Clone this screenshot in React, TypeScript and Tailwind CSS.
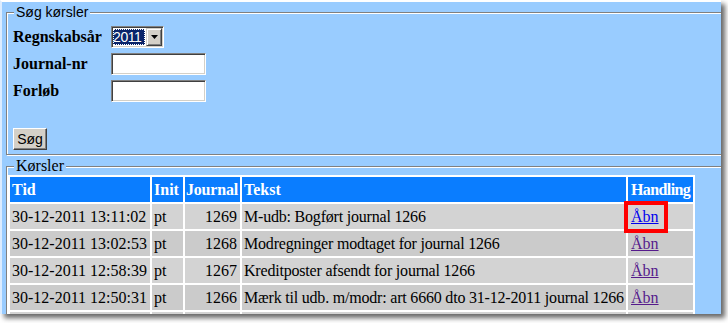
import React from "react";

type Run = { tid: string; init: string; journal: number; tekst: string };

const runs: Run[] = [
  { tid: "30-12-2011 13:11:02", init: "pt", journal: 1269, tekst: "M-udb: Bogført journal 1266" },
  { tid: "30-12-2011 13:02:53", init: "pt", journal: 1268, tekst: "Modregninger modtaget for journal 1266" },
  { tid: "30-12-2011 12:58:39", init: "pt", journal: 1267, tekst: "Kreditposter afsendt for journal 1266" },
  { tid: "30-12-2011 12:50:31", init: "pt", journal: 1266, tekst: "Mærk til udb. m/modr: art 6660 dto 31-12-2011 journal 1266" },
];

const serif = "font-['Liberation_Serif','Times_New_Roman',serif]";
const sans = "font-['Liberation_Sans',Arial,sans-serif]";

function TextBox() {
  return (
    <div className="h-[22px] w-[95px] border border-t-[#808080] border-l-[#808080] border-r-white border-b-white bg-white shadow-[inset_1px_1px_0_#404040,inset_-1px_-1px_0_#d4d0c8]" />
  );
}

function YearSelect() {
  return (
    <div className="flex h-[22px] w-[53px] border border-t-[#808080] border-l-[#808080] border-r-white border-b-white bg-white p-[1px] shadow-[inset_1px_1px_0_#404040,inset_-1px_-1px_0_#d4d0c8]">
      <div className="flex flex-1 items-center py-[1px] pr-[1px]">
        <span
          className={`flex h-full flex-1 items-center bg-[#0a246a] text-[14px] leading-none tracking-[-0.4px] text-white outline-1 outline-dotted outline-white -outline-offset-1 ${sans}`}
        >
          2011
        </span>
      </div>
      <div className="flex w-[16px] items-center justify-center border border-t-[#d4d0c8] border-l-[#d4d0c8] border-r-[#404040] border-b-[#404040] bg-[#d4d0c8] shadow-[inset_1px_1px_0_#fff,inset_-1px_-1px_0_#808080]">
        <svg width="7" height="4" viewBox="0 0 7 4">
          <path d="M0 0h7L3.5 4z" fill="#000" />
        </svg>
      </div>
    </div>
  );
}

function FormRow({ label, children }: { label: string; children: React.ReactNode }) {
  return (
    <div className="flex h-[27px] items-center">
      <span className={`w-[98px] text-[16px] font-bold text-black ${serif}`}>{label}</span>
      {children}
    </div>
  );
}

export default function App() {
  return (
    <div className="min-h-screen bg-white">
      <div className="relative h-[314px] w-[721px] overflow-hidden border-t-2 border-l-2 border-t-white border-l-[#dcecff] bg-[#99ccff] shadow-[4px_4px_5px_rgba(0,0,0,0.6)]">
        <div className="w-[760px]">
          <fieldset className="mt-[2px] ml-[4px] w-[740px] border border-[#808080] pl-[6px] pt-[3px] pb-[4px] shadow-[inset_1px_1px_0_#fff,1px_1px_0_#fff]">
            <legend className={`ml-[1px] bg-[#99ccff] px-[2px] text-[14px] leading-[16px] text-black ${sans}`}>
              Søg kørsler
            </legend>
            <FormRow label="Regnskabsår">
              <YearSelect />
            </FormRow>
            <FormRow label="Journal-nr">
              <TextBox />
            </FormRow>
            <FormRow label="Forløb">
              <TextBox />
            </FormRow>
            <button
              className={`mt-[24px] flex h-[22px] w-[34px] items-center justify-center border border-t-white border-l-white border-r-[#404040] border-b-[#404040] bg-[#d4d0c8] text-[14px] text-black shadow-[inset_-1px_-1px_0_#808080] ${sans}`}
            >
              Søg
            </button>
          </fieldset>

          <fieldset className="mt-[2px] ml-[4px] w-[740px] border border-[#808080] pl-[1px] shadow-[inset_1px_1px_0_#fff,1px_1px_0_#fff]">
            <legend className={`ml-[6px] bg-[#99ccff] px-[2px] text-[16px] leading-[18px] text-black ${serif}`}>
              Kørsler
            </legend>
            <table className={`w-[687px] table-fixed border-separate border-spacing-[2px] bg-white text-[16px] leading-[18px] ${serif}`}>
              <colgroup>
                <col className="w-[140px]" />
                <col className="w-[31px]" />
                <col className="w-[55px]" />
                <col className="w-[384px]" />
                <col className="w-[65px]" />
              </colgroup>
              <thead>
                <tr className="h-[25px] bg-[#0a7dff] text-left font-bold text-white">
                  <th className="px-[2px] whitespace-nowrap">Tid</th>
                  <th className="px-[2px] whitespace-nowrap">Init</th>
                  <th className="px-[1px] tracking-[-0.2px] whitespace-nowrap">Journal</th>
                  <th className="px-[2px] whitespace-nowrap">Tekst</th>
                  <th className="px-[3px] tracking-[-0.6px] whitespace-nowrap">Handling</th>
                </tr>
              </thead>
              <tbody>
                {runs.map((r, i) => (
                  <tr key={r.journal} className={`h-[25px] text-black ${i % 2 === 0 ? "bg-[#d3d3d3]" : "bg-[#cbcbcb]"}`}>
                    <td className="px-[2px] whitespace-nowrap">{r.tid}</td>
                    <td className="px-[2px] whitespace-nowrap">{r.init}</td>
                    <td className="pr-[3px] text-right whitespace-nowrap">{r.journal}</td>
                    <td className="px-[2px] tracking-[-0.2px] whitespace-nowrap">{r.tekst}</td>
                    <td className="relative px-[3px] whitespace-nowrap">
                      <a href="#" className={`underline ${i === 0 ? "text-[#0000ee]" : "text-[#551a8b]"}`}>
                        Åbn
                      </a>
                      {i === 0 && (
                        <span className="absolute -top-[3px] -left-[4px] h-[32px] w-[44px] border-4 border-[#ff0000]" />
                      )}
                    </td>
                  </tr>
                ))}
                <tr className="h-[25px] bg-[#d3d3d3]">
                  <td />
                  <td />
                  <td />
                  <td />
                  <td />
                </tr>
              </tbody>
            </table>
          </fieldset>
        </div>
      </div>
    </div>
  );
}
